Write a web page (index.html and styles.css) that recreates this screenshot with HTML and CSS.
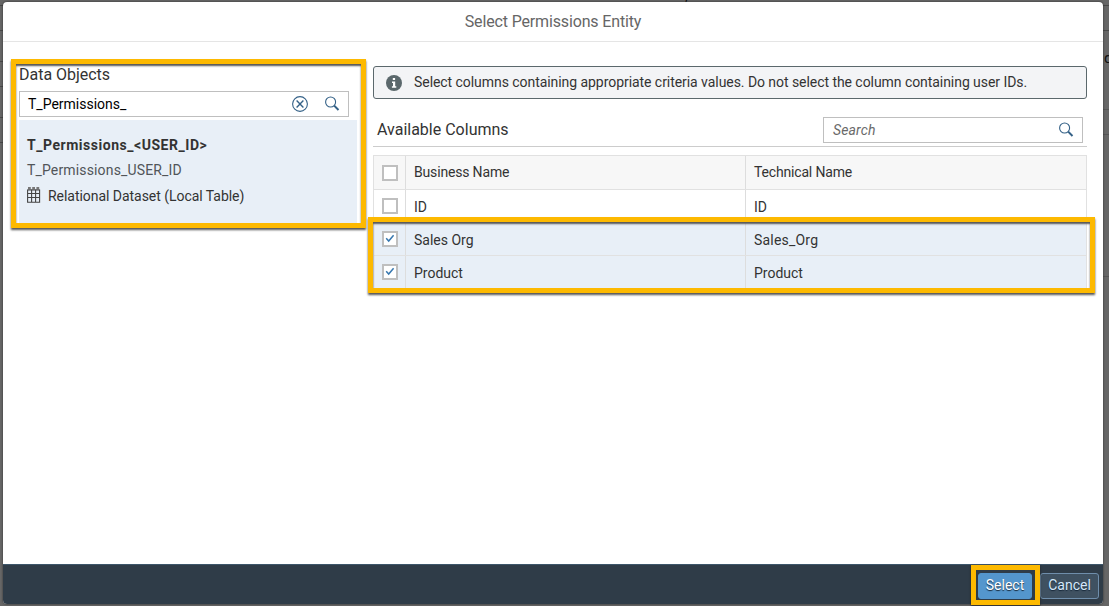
FILE: index.html
```html
<!DOCTYPE html>
<html lang="en">
<head>
<meta charset="utf-8">
<title>Select Permissions Entity</title>
<link rel="stylesheet" href="styles.css">
</head>
<body>
<svg class="defs" aria-hidden="true">
  <symbol id="search" viewBox="0 0 16 16"><circle cx="6.6" cy="6" r="5" fill="none" stroke="#346187" stroke-width="1.1"/><path d="M10.2 9.6 14.5 14" stroke="#346187" stroke-width="2" fill="none"/></symbol>
  <symbol id="tick" viewBox="0 0 12 12"><path d="M2.2 5.2 4.7 8 9.6 2.2" fill="none" stroke="#3878b0" stroke-width="1.5"/></symbol>
</svg>
<div class="backdrop">
  <i class="rule r1"></i><i class="rule r2"></i><i class="rule r3"></i><i class="rule r4"></i><i class="rule r5"></i><i class="rule r6"></i>
  <span class="hidden-letter">d</span><span class="hidden-tail">y</span>
</div>
<main class="dialog">
  <header class="title"><span>Select Permissions Entity</span></header>
  <div class="content">
    <section class="objects">
      <h2 class="heading objects-heading">Data Objects</h2>
      <div class="field objects-field">
        <span class="value">T_Permissions_</span>
        <svg class="icon clear" viewBox="0 0 16 16"><circle cx="8" cy="8" r="7.4" fill="none" stroke="#346187" stroke-width="1.1"/><path d="M4.6 4.6l6.8 6.8M11.4 4.6l-6.8 6.8" stroke="#346187" stroke-width="1.4"/></svg>
        <svg class="icon"><use href="#search"/></svg>
      </div>
      <div class="object">
        <div class="object-name">T_Permissions_&lt;USER_ID&gt;</div>
        <div class="object-tech">T_Permissions_USER_ID</div>
        <div class="object-type">
          <svg class="table-icon" viewBox="0 0 14 16"><path d="M.6 2.5v12.8h12V2.5M.6 2.9h12M.6 6.5h12M.6 10.5h12M4.6 2.5v12.8M8.6 2.5v12.8" fill="none" stroke="#444" stroke-width="1.1"/><path d="M1 1h2.8M5.2 1h2.8M9.4 1h2.8" stroke="#777" stroke-width="1.8"/></svg>
          <span class="type-text">Relational Dataset (Local Table)</span>
        </div>
      </div>
    </section>
    <section class="columns">
      <div class="message">
        <svg class="info" viewBox="0 0 16 16"><circle cx="8" cy="8" r="8" fill="#5b686c"/><path d="M6.8 3h2.3v2H6.8zM6 6.5h3.2v4.8h1.1v1.4H5.9v-1.4H7V7.9H6z" fill="#fff"/></svg>
        <span class="message-text">Select columns containing appropriate criteria values. Do not select the column containing user IDs.</span>
      </div>
      <div class="toolbar">
        <h2 class="heading columns-heading">Available Columns</h2>
        <div class="field search-field"><span class="placeholder">Search</span><svg class="icon"><use href="#search"/></svg></div>
      </div>
      <div class="grid">
        <div class="row head"><div class="cell"><i class="box"></i></div><div class="cell"><span class="business">Business Name</span></div><div class="cell"><span class="technical">Technical Name</span></div></div>
        <div class="row"><div class="cell"><i class="box"></i></div><div class="cell">ID</div><div class="cell">ID</div></div>
        <div class="row selected"><div class="cell"><i class="box"><svg class="tick"><use href="#tick"/></svg></i></div><div class="cell">Sales Org</div><div class="cell wide">Sales_Org</div></div>
        <div class="row selected"><div class="cell"><i class="box"><svg class="tick"><use href="#tick"/></svg></i></div><div class="cell">Product</div><div class="cell">Product</div></div>
      </div>
    </section>
  </div>
  <footer class="footer">
    <button class="button primary">Select</button>
    <button class="button">Cancel</button>
  </footer>
</main>
<div class="mark mark-objects"></div>
<div class="mark mark-rows"></div>
<div class="mark mark-select"></div>
</body>
</html>
```
FILE: styles.css
```css
* { box-sizing: border-box; }
body { margin: 0; width: 1109px; height: 606px; overflow: hidden; background: #666; font: 14px/16px Roboto, "Liberation Sans", sans-serif; color: #333; padding: 2px 6px 2px 3px; }
.defs { position: absolute; width: 0; height: 0; }
.backdrop { position: absolute; inset: 0; overflow: hidden; }
.rule { position: absolute; left: 0; width: 100%; height: 1px; background: #484848; }
.r1 { top: 5px; } .r2 { top: 30px; } .r3 { top: 61px; } .r4 { top: 86px; } .r5 { top: 117px; } .r6 { top: 142px; }
.r3, .r4, .r5, .r6 { width: 3px; }
.backdrop::after { content: ""; position: absolute; right: 0; top: 109px; width: 6px; height: 166px; border: solid #555; border-width: 1px 0; background: linear-gradient(#555, #555) 0 24px / 6px 1px no-repeat; }
.hidden-letter { position: absolute; left: 1104px; top: 50px; color: #111; font-size: 15px; }
.hidden-tail { position: absolute; left: 683px; top: -12px; color: #111; }
.dialog { position: relative; width: 1100px; height: 602px; background: #fff; border-radius: 4px; overflow: hidden; display: flex; flex-direction: column; box-shadow: 0 0 2px #222; }
.title { height: 40px; flex: none; display: flex; align-items: center; justify-content: center; border-bottom: 1px solid #e5e5e5; color: #666; font-size: 16px; letter-spacing: -.15px; }
.content { flex: 1; display: flex; padding: 24px 16px 0; gap: 24px; }
.objects { width: 330px; }
.heading { margin: 0; font-size: 16px; line-height: 18px; font-weight: 400; color: #333; }
.objects-heading { letter-spacing: -.02px; }
.field { display: flex; align-items: center; border: 1px solid #bfbfbf; background: #fff; height: 26px; }
.objects-field { margin-top: 7px; padding: 0 8px; color: #000; }
.value { flex: 1; }
.icon { width: 16px; height: 16px; flex: none; }
.clear { margin-right: 16px; }
.object { margin-top: 3px; width: 338px; height: 103px; background: #e8eff7; padding: 17px 8px 0; }
.object-name { font-weight: 700; letter-spacing: .53px; }
.object-tech { margin-top: 9px; color: #515559; letter-spacing: .15px; }
.object-type { margin-top: 10px; display: flex; gap: 7px; }
.type-text { letter-spacing: -.04px; }
.table-icon { width: 14px; height: 16px; margin-top: -1px; }
.columns { width: 714px; }
.message { height: 33px; border: 1px solid #5b686c; border-radius: 3px; background: #f3f4f6; padding: 0 12px; display: flex; align-items: center; gap: 12px; }
.message-text { letter-spacing: -.055px; padding-bottom: 2px; }
.info { width: 16px; height: 16px; }
.toolbar { height: 48px; border-bottom: 1px solid #ccc; padding: 14px 4px 0; display: flex; align-items: center; justify-content: space-between; }
.search-field { width: 260px; padding: 0 8px 0 9px; justify-content: space-between; }
.placeholder { font-style: italic; color: #6a6a6a; letter-spacing: .15px; }
.grid { margin-top: 8px; border: 1px solid #e1e1e1; border-bottom: 0; }
.row { display: grid; grid-template-columns: 32px 340px 1fr; height: 33px; border-bottom: 1px solid #e1e1e1; }
.head { height: 34px; background: #f7f7f7; }
.selected { background: #e8eff7; }
.cell { display: flex; align-items: center; padding: 2px 8px 0; border-right: 1px solid #ddd; }
.cell:first-child { padding-top: 0; }
.head .cell { padding-top: 0; padding-bottom: 1px; }
.head .cell:first-child { padding: 1px 8px 0; }
.cell:last-child { border-right: 0; }
.wide { letter-spacing: .2px; }
.business, .technical { letter-spacing: -.17px; }
.box { width: 16px; height: 16px; flex: none; border: 2px solid #bfbfbf; background: #fff; display: block; }
.tick { width: 12px; height: 12px; display: block; }
.footer { height: 40px; flex: none; background: #2f3c48; border-top: 1px solid #3d566a; display: flex; align-items: center; justify-content: flex-end; gap: 8px; padding: 2px 4px 0 0; }
.button { font: 14px/16px Roboto, "Liberation Sans", sans-serif; width: 59px; height: 26px; padding: 0 0 2px; text-align: center; border: 1px solid #6f8eab; border-radius: 3px; background: #3f5161; color: #d5e8fb; text-shadow: 0 1px 1px #152638; }
.primary { width: 54px; background: #5496cd; border-color: #5496cd; color: #fff; }
.mark { position: absolute; border: 5px solid #fdb900; box-shadow: 0 2px 2px #555, inset 0 2px 2px #555; pointer-events: none; }
.mark-objects { left: 11px; top: 59px; width: 355px; height: 169px; }
.mark-rows { left: 368px; top: 217px; width: 727px; height: 76px; }
.mark-select { left: 971px; top: 565px; width: 69px; height: 40px; box-shadow: 0 1px 2px #222; }
```
